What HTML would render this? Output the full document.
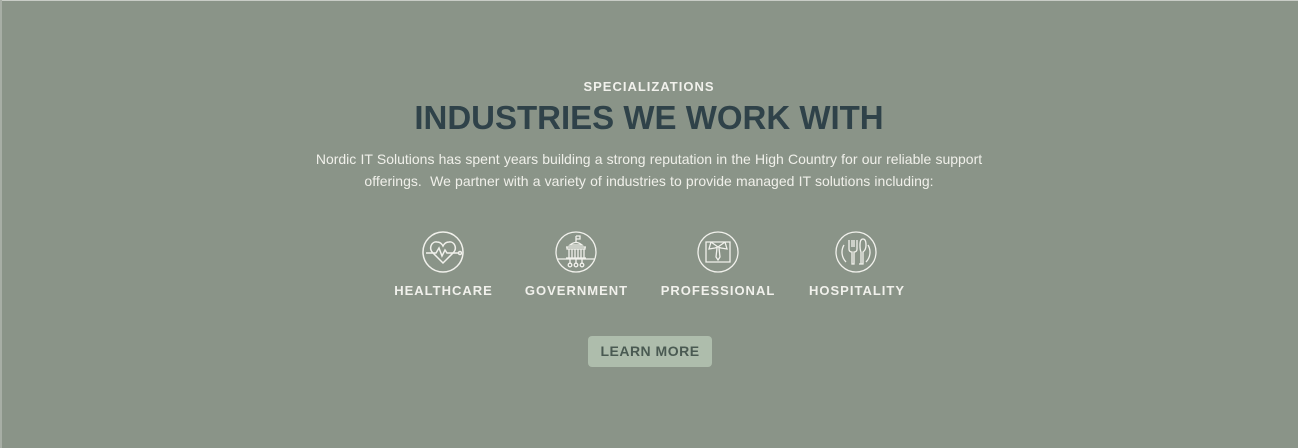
<!DOCTYPE html>
<html><head><style>
html,body{margin:0;padding:0}
body{width:1298px;height:448px;background:#8a9488;position:relative;overflow:hidden;font-family:"Liberation Sans",sans-serif}
.edge{position:absolute;left:0;top:0;width:2px;height:448px;background:#a7aea5}
.top{position:absolute;left:0;top:0;width:1298px;height:1px;background:#c8ccc6}
.c{position:absolute;left:0;width:1298px;text-align:center}
.sub{top:79px;font-size:13px;font-weight:bold;letter-spacing:1px;color:#f1f1ec}
.h{top:99px;font-size:33px;font-weight:bold;color:#2f4249;letter-spacing:0}
.p{top:148px;font-size:14px;line-height:22px;color:#f0f0ea;word-spacing:0.3px}
.lbl{position:absolute;top:283px;font-size:13px;font-weight:bold;letter-spacing:1px;color:#f1f1ec;transform:translateX(-50%);white-space:nowrap}
svg.i{position:absolute;top:231px}
.btn{position:absolute;left:588px;top:336px;width:124px;height:31px;border-radius:4px;background:#aebdac;color:#4a5a52;font-weight:bold;font-size:14px;line-height:31px;text-align:center;letter-spacing:0.5px}
</style></head><body>
<div class="top"></div><div class="edge"></div>
<div class="c sub">SPECIALIZATIONS</div>
<div class="c h">INDUSTRIES WE WORK WITH</div>
<div class="c p">Nordic IT Solutions has spent years building a strong reputation in the High Country for our reliable support<br>offerings.&nbsp; We partner with a variety of industries to provide managed IT solutions including:</div>

<svg class="i" style="left:422px" width="42" height="42" viewBox="0 0 42 42" fill="none" stroke="#f1f1ec" stroke-width="1.5"><circle cx="21" cy="21" r="20"/><path d="M21 32 L11 22 C6 17 10 10 15 11 C18 11 20 13 21 15 C22 13 24 11 27 11 C32 10 36 17 31 22 Z"/><path d="M4 22 H14 L17 17 L20 25 L23 19 L25 22 H37"/><circle cx="38" cy="22" r="1.5"/></svg>
<svg class="i" style="left:555px" width="42" height="42" viewBox="0 0 42 42" fill="none" stroke="#f1f1ec" stroke-width="1.3"><circle cx="21" cy="21" r="20"/><path d="M21 5 V11 M21 5 H25 V8 H21"/><path d="M15 14 Q21 9 27 14 Z M11 16 H31 M12 16 V18 H30 V16 M14 18 V27 M17 18 V27 M20 18 V27 M23 18 V27 M26 18 V27 M29 18 V27 M11 27 H31"/><path d="M2 28 H40 M15 28 V32 M21 28 V32 M27 28 V32"/><circle cx="15" cy="34" r="1.8"/><circle cx="21" cy="34" r="1.8"/><circle cx="27" cy="34" r="1.8"/></svg>
<svg class="i" style="left:697px" width="42" height="42" viewBox="0 0 42 42" fill="none" stroke="#f1f1ec" stroke-width="1.3"><circle cx="21" cy="21" r="20"/><path d="M9 11 H33 V31 H9 Z"/><path d="M14 11 L21 16 L28 11 M14 11 L12 18 L18 17 L21 16 L24 17 L30 18 L28 11"/><path d="M20 17 L19 26 L21 29 L23 26 L22 17"/></svg>
<svg class="i" style="left:835px" width="42" height="42" viewBox="0 0 42 42" fill="none" stroke="#f1f1ec" stroke-width="1.3"><circle cx="21" cy="21" r="20"/><path d="M9 14 A14 14 0 0 0 11 31 M33 14 A14 14 0 0 1 31 31"/><path d="M14 9 V18 Q14 21 17 21 V33 H19 V21 Q22 21 22 18 V9 M17 9 V16 M19 9 V16"/><path d="M24 33 H28 V21 Q31 19 31 14 Q31 8 28 8 Q25 8 25 14 Q25 19 26 21 V33"/></svg>

<div class="lbl" style="left:443.5px">HEALTHCARE</div>
<div class="lbl" style="left:576.5px">GOVERNMENT</div>
<div class="lbl" style="left:718px">PROFESSIONAL</div>
<div class="lbl" style="left:857px">HOSPITALITY</div>
<div class="btn">LEARN MORE</div>
</body></html>
